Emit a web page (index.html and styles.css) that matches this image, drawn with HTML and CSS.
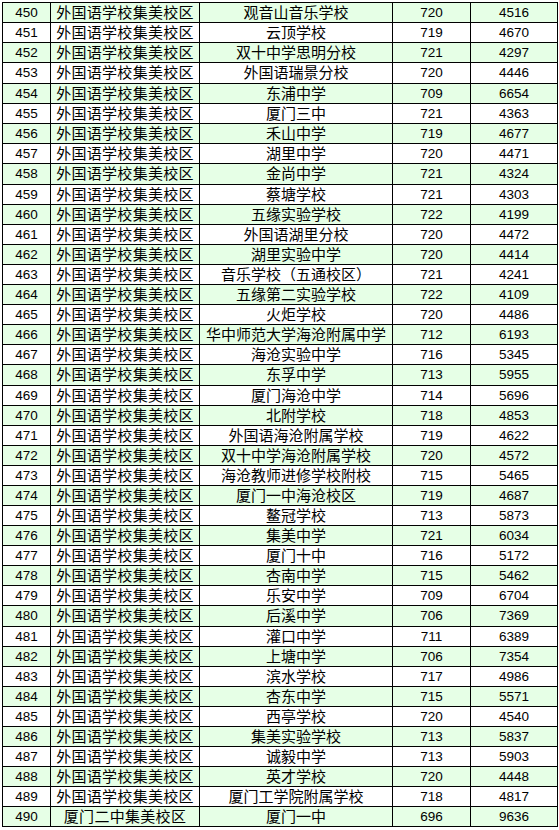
FILE: index.html
```html
<!DOCTYPE html>
<html lang="zh">
<head>
<meta charset="utf-8">
<link rel="stylesheet" href="styles.css">
</head>
<body>
<table class="grid">
<colgroup><col class="c1"><col class="c2"><col class="c3"><col class="c4"><col class="c5"></colgroup>
<tbody>
<tr class="g"><td>450</td><td>外国语学校集美校区</td><td>观音山音乐学校</td><td>720</td><td>4516</td></tr>
<tr><td>451</td><td>外国语学校集美校区</td><td>云顶学校</td><td>719</td><td>4670</td></tr>
<tr class="g"><td>452</td><td>外国语学校集美校区</td><td>双十中学思明分校</td><td>721</td><td>4297</td></tr>
<tr class="t"><td>453</td><td>外国语学校集美校区</td><td>外国语瑞景分校</td><td>720</td><td>4446</td></tr>
<tr class="g"><td>454</td><td>外国语学校集美校区</td><td>东浦中学</td><td>709</td><td>6654</td></tr>
<tr><td>455</td><td>外国语学校集美校区</td><td>厦门三中</td><td>721</td><td>4363</td></tr>
<tr class="g"><td>456</td><td>外国语学校集美校区</td><td>禾山中学</td><td>719</td><td>4677</td></tr>
<tr><td>457</td><td>外国语学校集美校区</td><td>湖里中学</td><td>720</td><td>4471</td></tr>
<tr class="g t"><td>458</td><td>外国语学校集美校区</td><td>金尚中学</td><td>721</td><td>4324</td></tr>
<tr><td>459</td><td>外国语学校集美校区</td><td>蔡塘学校</td><td>721</td><td>4303</td></tr>
<tr class="g"><td>460</td><td>外国语学校集美校区</td><td>五缘实验学校</td><td>722</td><td>4199</td></tr>
<tr><td>461</td><td>外国语学校集美校区</td><td>外国语湖里分校</td><td>720</td><td>4472</td></tr>
<tr class="g"><td>462</td><td>外国语学校集美校区</td><td>湖里实验中学</td><td>720</td><td>4414</td></tr>
<tr><td>463</td><td>外国语学校集美校区</td><td>音乐学校（五通校区）</td><td>721</td><td>4241</td></tr>
<tr class="g"><td>464</td><td>外国语学校集美校区</td><td>五缘第二实验学校</td><td>722</td><td>4109</td></tr>
<tr><td>465</td><td>外国语学校集美校区</td><td>火炬学校</td><td>720</td><td>4486</td></tr>
<tr class="g"><td>466</td><td>外国语学校集美校区</td><td>华中师范大学海沧附属中学</td><td>712</td><td>6193</td></tr>
<tr><td>467</td><td>外国语学校集美校区</td><td>海沧实验中学</td><td>716</td><td>5345</td></tr>
<tr class="g t"><td>468</td><td>外国语学校集美校区</td><td>东孚中学</td><td>713</td><td>5955</td></tr>
<tr><td>469</td><td>外国语学校集美校区</td><td>厦门海沧中学</td><td>714</td><td>5696</td></tr>
<tr class="g"><td>470</td><td>外国语学校集美校区</td><td>北附学校</td><td>718</td><td>4853</td></tr>
<tr><td>471</td><td>外国语学校集美校区</td><td>外国语海沧附属学校</td><td>719</td><td>4622</td></tr>
<tr class="g"><td>472</td><td>外国语学校集美校区</td><td>双十中学海沧附属学校</td><td>720</td><td>4572</td></tr>
<tr><td>473</td><td>外国语学校集美校区</td><td>海沧教师进修学校附校</td><td>715</td><td>5465</td></tr>
<tr class="g"><td>474</td><td>外国语学校集美校区</td><td>厦门一中海沧校区</td><td>719</td><td>4687</td></tr>
<tr><td>475</td><td>外国语学校集美校区</td><td>鳌冠学校</td><td>713</td><td>5873</td></tr>
<tr class="g"><td>476</td><td>外国语学校集美校区</td><td>集美中学</td><td>721</td><td>6034</td></tr>
<tr><td>477</td><td>外国语学校集美校区</td><td>厦门十中</td><td>716</td><td>5172</td></tr>
<tr class="g"><td>478</td><td>外国语学校集美校区</td><td>杏南中学</td><td>715</td><td>5462</td></tr>
<tr><td>479</td><td>外国语学校集美校区</td><td>乐安中学</td><td>709</td><td>6704</td></tr>
<tr class="g t"><td>480</td><td>外国语学校集美校区</td><td>后溪中学</td><td>706</td><td>7369</td></tr>
<tr><td>481</td><td>外国语学校集美校区</td><td>灌口中学</td><td>711</td><td>6389</td></tr>
<tr class="g"><td>482</td><td>外国语学校集美校区</td><td>上塘中学</td><td>706</td><td>7354</td></tr>
<tr><td>483</td><td>外国语学校集美校区</td><td>滨水学校</td><td>717</td><td>4986</td></tr>
<tr class="g"><td>484</td><td>外国语学校集美校区</td><td>杏东中学</td><td>715</td><td>5571</td></tr>
<tr><td>485</td><td>外国语学校集美校区</td><td>西亭学校</td><td>720</td><td>4540</td></tr>
<tr class="g"><td>486</td><td>外国语学校集美校区</td><td>集美实验学校</td><td>713</td><td>5837</td></tr>
<tr><td>487</td><td>外国语学校集美校区</td><td>诚毅中学</td><td>713</td><td>5903</td></tr>
<tr class="g"><td>488</td><td>外国语学校集美校区</td><td>英才学校</td><td>720</td><td>4448</td></tr>
<tr><td>489</td><td>外国语学校集美校区</td><td>厦门工学院附属学校</td><td>718</td><td>4817</td></tr>
<tr class="g"><td>490</td><td>厦门二中集美校区</td><td>厦门一中</td><td>696</td><td>9636</td></tr>
</tbody>
</table>
</body>
</html>
```
FILE: styles.css
```css
html, body {
  margin: 0;
  padding: 0;
  background: #ffffff;
}
body {
  padding: 2px 0 0 2px;
}
.grid {
  border-collapse: collapse;
  table-layout: fixed;
  width: 555px;
  font-family: "Liberation Sans", "Noto Sans CJK SC", sans-serif;
  font-size: 15px;
  color: #000;
}
.c1 { width: 48px; }
.c2 { width: 149px; }
.c3 { width: 193px; }
.c4 { width: 78px; }
.c5 { width: 87px; }
.grid td {
  border: 1px solid #000;
  height: 19px;
  padding: 0;
  line-height: 18px;
  text-align: center;
  white-space: nowrap;
  overflow: hidden;
}
.grid tr.t td {
  height: 20px;
}
.grid tr.g td {
  background: #e6ffe6;
}
.grid td:nth-child(2) {
  letter-spacing: 0.3px;
}
.grid td:nth-child(1),
.grid td:nth-child(4),
.grid td:nth-child(5) {
  font-size: 13.5px;
}
```
